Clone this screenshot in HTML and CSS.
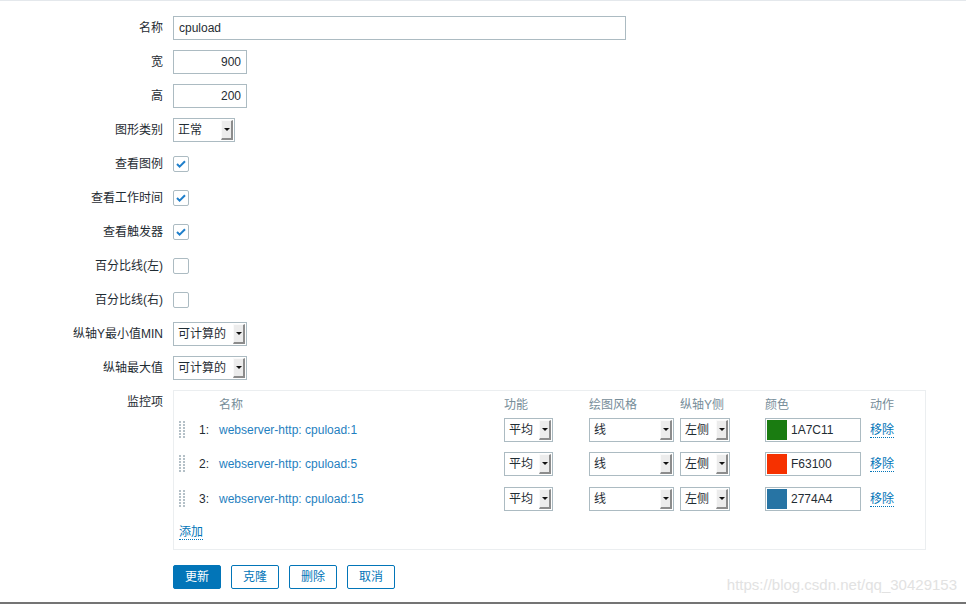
FILE: index.html
```html
<!DOCTYPE html>
<html lang="zh">
<head>
<meta charset="utf-8">
<title>图形</title>
<link rel="stylesheet" href="styles.css">
</head>
<body>
<div class="page">
  <div class="topline"></div>
  <div class="form">
    <div class="lbl">名称</div>
    <div class="field"><span class="inp w-name">cpuload</span></div>

    <div class="lbl">宽</div>
    <div class="field"><span class="inp w-num num">900</span></div>

    <div class="lbl">高</div>
    <div class="field"><span class="inp w-num num">200</span></div>

    <div class="lbl">图形类别</div>
    <div class="field"><span class="sel w-62"><span class="sel-txt">正常</span><span class="arrow"></span></span></div>

    <div class="lbl">查看图例</div>
    <div class="field"><span class="cb on"><svg width="12" height="10" viewBox="0 0 12 10"><path d="M2 5 L4.6 7.6 L10 2.2" fill="none" stroke="#1f7fcb" stroke-width="2"/></svg></span></div>

    <div class="lbl">查看工作时间</div>
    <div class="field"><span class="cb on"><svg width="12" height="10" viewBox="0 0 12 10"><path d="M2 5 L4.6 7.6 L10 2.2" fill="none" stroke="#1f7fcb" stroke-width="2"/></svg></span></div>

    <div class="lbl">查看触发器</div>
    <div class="field"><span class="cb on"><svg width="12" height="10" viewBox="0 0 12 10"><path d="M2 5 L4.6 7.6 L10 2.2" fill="none" stroke="#1f7fcb" stroke-width="2"/></svg></span></div>

    <div class="lbl">百分比线(左)</div>
    <div class="field"><span class="cb"></span></div>

    <div class="lbl">百分比线(右)</div>
    <div class="field"><span class="cb"></span></div>

    <div class="lbl">纵轴Y最小值MIN</div>
    <div class="field"><span class="sel w-74"><span class="sel-txt">可计算的</span><span class="arrow"></span></span></div>

    <div class="lbl">纵轴最大值</div>
    <div class="field"><span class="sel w-74"><span class="sel-txt">可计算的</span><span class="arrow"></span></span></div>

    <div class="lbl">监控项</div>
    <div class="field">
      <div class="items">
        <div class="irow head">
          <span></span><span></span>
          <span>名称</span><span>功能</span><span>绘图风格</span><span>纵轴Y侧</span><span>颜色</span><span>动作</span>
        </div>

        <div class="irow first">
          <span class="drag"><svg width="8" height="18" viewBox="0 0 8 18"><g fill="#b4c0c7"><rect x="0" y="0" width="2" height="2"/><rect x="4" y="0" width="2" height="2"/><rect x="0" y="3" width="2" height="2"/><rect x="4" y="3" width="2" height="2"/><rect x="0" y="6" width="2" height="2"/><rect x="4" y="6" width="2" height="2"/><rect x="0" y="9" width="2" height="2"/><rect x="4" y="9" width="2" height="2"/><rect x="0" y="12" width="2" height="2"/><rect x="4" y="12" width="2" height="2"/><rect x="0" y="15" width="2" height="2"/><rect x="4" y="15" width="2" height="2"/></g></svg></span>
          <span class="no">1:</span>
          <span><a class="link">webserver-http: cpuload:1</a></span>
          <span><span class="sel w-49"><span class="sel-txt">平均</span><span class="arrow"></span></span></span>
          <span><span class="sel w-85"><span class="sel-txt">线</span><span class="arrow"></span></span></span>
          <span><span class="sel w-50"><span class="sel-txt">左侧</span><span class="arrow"></span></span></span>
          <span><span class="color"><span class="swatch" style="background:#1A7C11"></span><span class="ctxt">1A7C11</span></span></span>
          <span><a class="dlink">移除</a></span>
        </div>

        <div class="irow">
          <span class="drag"><svg width="8" height="18" viewBox="0 0 8 18"><g fill="#b4c0c7"><rect x="0" y="0" width="2" height="2"/><rect x="4" y="0" width="2" height="2"/><rect x="0" y="3" width="2" height="2"/><rect x="4" y="3" width="2" height="2"/><rect x="0" y="6" width="2" height="2"/><rect x="4" y="6" width="2" height="2"/><rect x="0" y="9" width="2" height="2"/><rect x="4" y="9" width="2" height="2"/><rect x="0" y="12" width="2" height="2"/><rect x="4" y="12" width="2" height="2"/><rect x="0" y="15" width="2" height="2"/><rect x="4" y="15" width="2" height="2"/></g></svg></span>
          <span class="no">2:</span>
          <span><a class="link">webserver-http: cpuload:5</a></span>
          <span><span class="sel w-49"><span class="sel-txt">平均</span><span class="arrow"></span></span></span>
          <span><span class="sel w-85"><span class="sel-txt">线</span><span class="arrow"></span></span></span>
          <span><span class="sel w-50"><span class="sel-txt">左侧</span><span class="arrow"></span></span></span>
          <span><span class="color"><span class="swatch" style="background:#F63100"></span><span class="ctxt">F63100</span></span></span>
          <span><a class="dlink">移除</a></span>
        </div>

        <div class="irow third">
          <span class="drag"><svg width="8" height="18" viewBox="0 0 8 18"><g fill="#b4c0c7"><rect x="0" y="0" width="2" height="2"/><rect x="4" y="0" width="2" height="2"/><rect x="0" y="3" width="2" height="2"/><rect x="4" y="3" width="2" height="2"/><rect x="0" y="6" width="2" height="2"/><rect x="4" y="6" width="2" height="2"/><rect x="0" y="9" width="2" height="2"/><rect x="4" y="9" width="2" height="2"/><rect x="0" y="12" width="2" height="2"/><rect x="4" y="12" width="2" height="2"/><rect x="0" y="15" width="2" height="2"/><rect x="4" y="15" width="2" height="2"/></g></svg></span>
          <span class="no">3:</span>
          <span><a class="link">webserver-http: cpuload:15</a></span>
          <span><span class="sel w-49"><span class="sel-txt">平均</span><span class="arrow"></span></span></span>
          <span><span class="sel w-85"><span class="sel-txt">线</span><span class="arrow"></span></span></span>
          <span><span class="sel w-50"><span class="sel-txt">左侧</span><span class="arrow"></span></span></span>
          <span><span class="color"><span class="swatch" style="background:#2774A4"></span><span class="ctxt">2774A4</span></span></span>
          <span><a class="dlink">移除</a></span>
        </div>

        <div class="add"><a class="dlink">添加</a></div>
      </div>
    </div>

    <div class="lbl"></div>
    <div class="field buttons">
      <span class="btn primary">更新</span>
      <span class="btn">克隆</span>
      <span class="btn">删除</span>
      <span class="btn">取消</span>
    </div>
  </div>
  <div class="watermark">https://blog.csdn.net/qq_30429153</div>
</div>
</body>
</html>
```

FILE: styles.css
```css
* { box-sizing: border-box; }
html, body { margin: 0; padding: 0; background: #fff; }
body {
  font-family: "Liberation Sans", Arial, "Noto Sans CJK SC", sans-serif;
  font-size: 12px;
  color: #1f2c33;
}
.page {
  position: relative;
  width: 966px;
  height: 604px;
  border-bottom: 2px solid #747474;
  overflow: hidden;
}
.topline { height: 1px; background: #e4e8ec; }
.form {
  display: grid;
  grid-template-columns: 163px 1fr;
  column-gap: 10px;
  row-gap: 10px;
  padding-top: 15px;
}
.lbl {
  text-align: right;
  line-height: 24px;
  height: 24px;
  white-space: nowrap;
}
.field { display: flex; align-items: flex-start; min-height: 24px; }

.inp {
  display: inline-block;
  height: 24px;
  line-height: 22px;
  border: 1px solid #acbbc2;
  padding: 0 5px;
  background: #fff;
}
.w-name { width: 453px; }
.w-num { width: 74px; }
.num { text-align: right; }

.sel {
  display: inline-flex;
  height: 24px;
  border: 1px solid #acbbc2;
  background: #fff;
  padding: 1px;
}
.sel-txt { flex: 1; line-height: 20px; padding-left: 3px; white-space: nowrap; color: #1f2c33; }
.arrow {
  width: 12px;
  height: 20px;
  background: #ececec;
  border-left: 1px solid #fafafa;
  border-top: 1px solid #fafafa;
  border-right: 2px solid #8c8c8c;
  border-bottom: 2px solid #8c8c8c;
  position: relative;
}
.arrow::after {
  content: "";
  position: absolute;
  left: 2px;
  top: 7px;
  border-left: 3px solid transparent;
  border-right: 3px solid transparent;
  border-top: 3px solid #111;
}
.w-62 { width: 62px; }
.w-74 { width: 74px; }
.w-49 { width: 49px; }
.w-85 { width: 85px; }
.w-50 { width: 50px; }

.cb {
  display: inline-flex;
  align-items: center;
  justify-content: center;
  width: 16px;
  height: 16px;
  margin-top: 4px;
  border: 1px solid #acbbc2;
  border-radius: 2px;
  background: #fff;
}

.items {
  width: 753px;
  border: 1px solid #ebeef0;
  padding: 0 0 5px 5px;
}
.irow {
  display: grid;
  grid-template-columns: 20px 20px 285px 85px 91px 85px 105px 1fr;
  height: 24px;
  align-items: center;
  margin-top: 10px;
  white-space: nowrap;
}
.irow > span { display: flex; align-items: center; }
.irow.head { margin-top: 0; color: #768d99; }
.irow.first { margin-top: 3px; }
.irow.third { margin-top: 11px; }
.drag { height: 24px; }
.no { color: #1f2c33; }
.link { color: #1f7fc0; text-decoration: none; }
.dlink {
  color: #0275b8;
  text-decoration: none;
  border-bottom: 1px dotted #0275b8;
  line-height: 14px;
}
.color {
  display: inline-flex;
  align-items: center;
  width: 96px;
  height: 24px;
  border: 1px solid #acbbc2;
  padding: 1px;
}
.swatch { width: 20px; height: 20px; }
.ctxt { padding-left: 4px; }
.add { margin-top: 9px; height: 24px; line-height: 24px; display: flex; align-items: center; }

.buttons { gap: 10px; margin-top: 5px; }
.btn {
  display: inline-block;
  width: 48px;
  height: 24px;
  line-height: 22px;
  text-align: center;
  border: 1px solid #0275b8;
  border-radius: 2px;
  color: #0275b8;
  background: #fff;
}
.btn.primary { background: #0275b8; color: #fff; }

.watermark {
  position: absolute;
  right: 9px;
  top: 576px;
  font-size: 15px;
  color: #e2e2e2;
  white-space: nowrap;
}
```
